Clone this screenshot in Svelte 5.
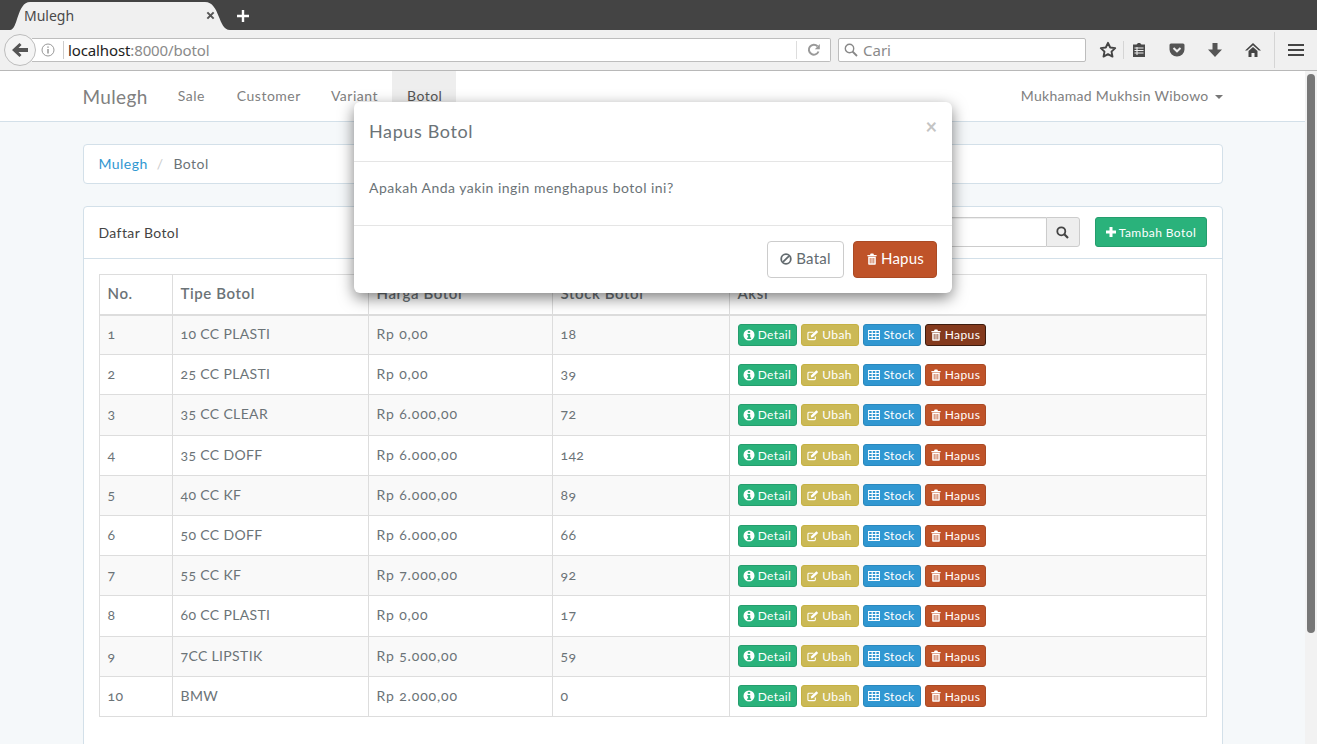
<script>
  const nav = ['Sale', 'Customer', 'Variant', 'Botol'];
  const rows = [
    [1, '10 CC PLASTI', 'Rp 0,00', 18],
    [2, '25 CC PLASTI', 'Rp 0,00', 39],
    [3, '35 CC CLEAR', 'Rp 6.000,00', 72],
    [4, '35 CC DOFF', 'Rp 6.000,00', 142],
    [5, '40 CC KF', 'Rp 6.000,00', 89],
    [6, '50 CC DOFF', 'Rp 6.000,00', 66],
    [7, '55 CC KF', 'Rp 7.000,00', 92],
    [8, '60 CC PLASTI', 'Rp 0,00', 17],
    [9, '7CC LIPSTIK', 'Rp 5.000,00', 59],
    [10, 'BMW', 'Rp 2.000,00', 0],
  ];
</script>

{#snippet info()}
  <svg class="ic" viewBox="0 0 12 12"><circle cx="6" cy="6" r="5.5" fill="currentColor" /><rect x="4.8" y="2" width="2.4" height="1.8" fill="var(--bg)" /><path d="M4.3 5h2.9v3.4h.9V10H4.2V8.4h.9V6.5h-.8z" fill="var(--bg)" /></svg>
{/snippet}
{#snippet edit()}
  <svg class="ic" viewBox="0 0 13 12"><path d="M9 7.5V10a1 1 0 0 1-1 1H2a1 1 0 0 1-1-1V4a1 1 0 0 1 1-1h5" fill="none" stroke="currentColor" stroke-width="1.2" /><path d="M4.5 6.3 10.2.8l1.9 1.9-5.6 5.6-2.2.3z" fill="currentColor" /></svg>
{/snippet}
{#snippet grid()}
  <svg class="ic" viewBox="0 0 12 12"><path d="M.6 1.5h10.8v9H.6zM.6 4.5h10.8M.6 7.5h10.8M4.2 1.5v9M7.8 1.5v9" fill="none" stroke="currentColor" stroke-width="1.1" /></svg>
{/snippet}
{#snippet trash()}
  <svg class="ic" viewBox="0 0 12 12"><path d="M4 2 4.7.6h2.6L8 2h2.6v1.2H1.4V2zM2.2 3.8h7.6V11a.8.8 0 0 1-.8.8H3a.8.8 0 0 1-.8-.8z" fill="currentColor" /><path d="M4.2 5v5.4M6 5v5.4M7.8 5v5.4" stroke="var(--bg)" stroke-width=".8" /></svg>
{/snippet}
{#snippet plus()}
  <svg class="ic" viewBox="0 0 12 12"><path d="M4.5 1h3v3.5H11v3H7.5V11h-3V7.500H1v-3h3.500z" fill="currentColor" /></svg>
{/snippet}

<div class="browser">
  <div class="tabstrip">
    <div class="tab">
      <svg class="tab-bg" viewBox="0 0 220 28" preserveAspectRatio="none"><path d="M0 28C8 28 7 0 20 0H195C210 0 208 28 220 28z" fill="#f0f0f0" /></svg>
      <span class="tab-title">Mulegh</span>
      <svg class="tab-x" viewBox="0 0 10 10"><path d="M1.500 1.500l7 7M8.500 1.500l-7 7" stroke="#555" stroke-width="2.200" /></svg>
    </div>
    <svg class="newtab" viewBox="0 0 14 14"><path d="M7 1v12M1 7h12" stroke="#fff" stroke-width="2.400" /></svg>
  </div>

  <div class="toolbar">
    <div class="back">
      <svg viewBox="0 0 16 14" width="16" height="14"><path d="M7.500 0 9.500 2 6.500 5H16v4H6.500l3 3-2 2L0 7z" fill="#555" /></svg>
    </div>
    <div class="urlbar">
      <svg class="i-circle" viewBox="0 0 14 14" width="14" height="14"><circle cx="7" cy="7" r="6" fill="none" stroke="#999" /><path d="M7 6v4.500M7 3.500v1.300" stroke="#888" stroke-width="1.300" /></svg>
      <span class="url-sep"></span>
      <span class="url"><b>localhost</b>:8000/botol</span>
      <span class="reload">
        <svg viewBox="0 0 14 14" width="14" height="14"><path d="M11.500 8.500A5 5 0 1 1 10.500 3.200" fill="none" stroke="#999" stroke-width="2" /><path d="M12.800 1v5.200H7.800z" fill="#999" /></svg>
      </span>
    </div>
    <div class="searchbar">
      <svg viewBox="0 0 14 14" width="14" height="14"><circle cx="5.500" cy="5.500" r="4.200" fill="none" stroke="#888" stroke-width="1.400" /><path d="m8.500 8.500 4.500 4.500" stroke="#888" stroke-width="1.800" /></svg>
      <span>Cari</span>
    </div>
    <div class="tools">
      <svg class="t-star" viewBox="0 0 18 18" width="18" height="18"><path d="m9 1.800 2.200 4.700 5 .6-3.700 3.500 1 5L9 13.100l-4.500 2.500 1-5L1.800 7.100l5-.6z" fill="none" stroke="#444" stroke-width="1.900" stroke-linejoin="round" /></svg>
      <span class="t-sep"></span>
      <svg class="t-clip" viewBox="0 0 16 16" width="16" height="16"><path d="M5.500 2.500 7 1h2l1.500 1.500H14V15H2V2.500z" fill="#4a4a4a" /><path d="M3.500 6h9M3.500 8.500h9M3.500 11h9M6 5v8" stroke="#eee" stroke-width="1.100" /></svg>
      <svg class="t-pocket" viewBox="0 0 16 16" width="16" height="16"><path d="M2 1.500h12A1.500 1.500 0 0 1 15.500 3v4.500a7.500 7 0 0 1-15 0V3A1.500 1.500 0 0 1 2 1.500z" fill="#555" /><path d="m4.500 6 3.500 3.300L11.500 6" fill="none" stroke="#eee" stroke-width="2" /></svg>
      <svg class="t-down" viewBox="0 0 16 16" width="16" height="16"><path d="M5.500 1h5v6.500H15L8 15 1 7.500h4.500z" fill="#555" /></svg>
      <svg class="t-home" viewBox="0 0 18 16" width="18" height="16"><path d="M9 1 1 8.500h2.200L9 3.200l5.800 5.300H17z" fill="#444" /><path d="M4.500 9 9 5l4.500 4v6h-3v-4h-3v4h-3z" fill="#444" /></svg>
      <span class="t-sep tall"></span>
      <svg class="t-menu" viewBox="0 0 16 14" width="16" height="14"><path d="M0 2h16M0 7h16M0 12h16" stroke="#444" stroke-width="2.200" /></svg>
    </div>
  </div>

  <div class="viewport">
    <div class="page">
      <nav class="navbar">
        <div class="container nav-inner">
          <a class="brand" href="#top">Mulegh</a>
          <ul class="nav-links">
            {#each nav as item}
              <li class:active={item === 'Botol'}>{item}</li>
            {/each}
          </ul>
          <div class="user">Mukhamad Mukhsin Wibowo <span class="caret"></span></div>
        </div>
      </nav>

      <div class="container">
        <div class="breadcrumb">
          <a href="#top">Mulegh</a>
          <span class="slash">/</span>
          <span>Botol</span>
        </div>

        <section class="panel">
          <header class="panel-head">
            <span class="panel-title">Daftar Botol</span>
            <div class="head-actions">
              <div class="search-group">
                <div class="search-input"></div>
                <div class="search-btn">
                  <svg viewBox="0 0 13 13" width="13" height="13"><circle cx="5.300" cy="5.300" r="4" fill="none" stroke="#444" stroke-width="1.800" /><path d="m8.300 8.300 3.700 3.700" stroke="#444" stroke-width="2.200" /></svg>
                </div>
              </div>
              <button class="btn add green">{@render plus()} Tambah Botol</button>
            </div>
          </header>

          <div class="panel-body">
            <table>
              <colgroup>
                <col class="c1" /><col class="c2" /><col class="c3" /><col class="c4" /><col />
              </colgroup>
              <thead>
                <tr><th>No.</th><th>Tipe Botol</th><th>Harga Botol</th><th>Stock Botol</th><th>Aksi</th></tr>
              </thead>
              <tbody>
                {#each rows as r, i}
                  <tr>
                    <td>{r[0]}</td>
                    <td>{r[1]}</td>
                    <td class="price">{r[2]}</td>
                    <td>{r[3]}</td>
                    <td class="aksi">
                      <button class="btn xs green">{@render info()} Detail</button>
                      <button class="btn xs yellow">{@render edit()} Ubah</button>
                      <button class="btn xs blue">{@render grid()} Stock</button>
                      <button class="btn xs red" class:pressed={i === 0}>{@render trash()} Hapus</button>
                    </td>
                  </tr>
                {/each}
              </tbody>
            </table>
          </div>
        </section>
      </div>

      <div class="modal" role="dialog">
        <div class="modal-head">
          <h4>Hapus Botol</h4>
          <span class="close">×</span>
        </div>
        <div class="modal-body">Apakah Anda yakin ingin menghapus botol ini?</div>
        <div class="modal-foot">
          <button class="btn md plain">
            <svg class="ic" viewBox="0 0 12 12"><circle cx="6" cy="6" r="4.800" fill="none" stroke="currentColor" stroke-width="1.800" /><path d="m2.800 9.200 6.400-6.400" stroke="currentColor" stroke-width="1.800" /></svg>
            Batal
          </button>
          <button class="btn md red">{@render trash()} Hapus</button>
        </div>
      </div>
    </div>

    <div class="scrollbar"><div class="thumb"></div></div>
  </div>
</div>

<style>
  :global(body) {
    margin: 0;
    overflow: hidden;
  }

  .browser {
    width: 1317px;
    height: 744px;
    display: flex;
    flex-direction: column;
    overflow: hidden;
    font-family: Lato, "Liberation Sans", sans-serif;
    font-size: 14px;
    color: #6b7377;
  }

  /* browser chrome */
  .tabstrip {
    height: 30px;
    flex: none;
    background: #444;
    display: flex;
    align-items: flex-end;
    box-sizing: border-box;
    padding-left: 10px;
  }

  .tab {
    position: relative;
    width: 220px;
    height: 28px;
    display: flex;
    align-items: center;
    justify-content: space-between;
    box-sizing: border-box;
    padding: 0 15px 1px 14px;
    font: 14px "Noto Sans", sans-serif;
    color: #4a4a4a;
  }

  .tab-bg {
    position: absolute;
    inset: 0;
    width: 100%;
    height: 100%;
  }

  .tab-title {
    position: relative;
  }

  .tab-x {
    position: relative;
    width: 9px;
    height: 9px;
  }

  .newtab {
    width: 14px;
    height: 14px;
    margin: 0 0 7px 6px;
  }

  .toolbar {
    height: 41px;
    flex: none;
    box-sizing: border-box;
    background: #f0f0f0;
    border-bottom: 1px solid #b8b8b8;
    display: flex;
    align-items: center;
    padding-left: 4px;
    font-family: "Noto Sans", sans-serif;
  }

  .back {
    width: 30px;
    height: 30px;
    border: 1px solid #bdbdbd;
    border-radius: 50%;
    background: #f4f4f4;
    display: flex;
    align-items: center;
    justify-content: center;
    z-index: 1;
    flex: none;
  }

  .urlbar {
    width: 799px;
    height: 24px;
    margin-left: -4px;
    box-sizing: border-box;
    background: #fff;
    border: 1px solid #bdbdbd;
    border-left: none;
    border-radius: 0 2px 2px 0;
    display: flex;
    align-items: center;
    padding-left: 9px;
    font-size: 15px;
    letter-spacing: -0.12px;
    color: #8a8a8a;
    flex: none;
  }

  .url-sep {
    width: 1px;
    height: 18px;
    background: #ccc;
    margin: 0 4px 0 8px;
  }

  .url b {
    font-weight: 400;
    color: #222;
  }

  .reload {
    margin-left: auto;
    width: 33px;
    height: 18px;
    border-left: 1px solid #ddd;
    display: flex;
    align-items: center;
    justify-content: center;
  }

  .searchbar {
    width: 248px;
    height: 24px;
    margin-left: 7px;
    box-sizing: border-box;
    background: #fff;
    border: 1px solid #bdbdbd;
    border-radius: 2px;
    display: flex;
    align-items: center;
    gap: 5px;
    padding-left: 5px;
    font-size: 15px;
    color: #8a8a8a;
    flex: none;
  }

  .tools {
    display: flex;
    align-items: center;
    height: 100%;
  }

  .t-star { margin-left: 13px; }
  .t-sep { width: 1px; height: 18px; background: #d5d5d5; margin-left: 6px; }
  .t-sep.tall { height: 36px; margin-left: 12px; }
  .t-clip { margin-left: 7px; }
  .t-pocket { margin-left: 22px; }
  .t-down { margin-left: 22px; }
  .t-home { margin-left: 21px; }
  .t-menu { margin-left: 13px; }

  /* page */
  .viewport {
    flex: 1;
    min-height: 0;
    display: flex;
  }

  .page {
    position: relative;
    flex: 1;
    min-width: 0;
    background: #f5f8fa;
    overflow: hidden;
  }

  .scrollbar {
    width: 12px;
    flex: none;
    background: #f2f2f2;
    padding: 3px 2px 0 2px;
    box-sizing: border-box;
  }

  .thumb {
    height: 559px;
    background: #777;
    border-radius: 4px;
  }

  .container {
    width: 1140px;
    margin: 0 auto;
  }

  a {
    text-decoration: none;
  }

  .navbar {
    height: 51px;
    box-sizing: border-box;
    background: #fff;
    border-bottom: 1px solid #d3e0e9;
    margin-bottom: 22px;
  }

  .nav-inner {
    display: flex;
    align-items: stretch;
    height: 50px;
  }

  .brand {
    font-size: 19px;
    color: #808080;
    line-height: 51px;
    margin-right: 15px;
    letter-spacing: 0.35px;
  }

  .nav-links {
    list-style: none;
    display: flex;
    margin: 0;
    padding: 0;
  }

  .nav-links li {
    padding: 0 15px;
    line-height: 50px;
    color: #808080;
    letter-spacing: 0.5px;
  }

  .nav-links li:first-child {
    padding-right: 17px;
  }

  .nav-links li.active {
    background: #eee;
    color: #555;
    width: 34px;
    margin-left: -1px;
  }

  .user {
    margin-left: auto;
    line-height: 50px;
    color: #808080;
    letter-spacing: 0.3px;
  }

  .caret {
    display: inline-block;
    width: 0;
    height: 0;
    margin-left: 2px;
    vertical-align: middle;
    border-top: 4px solid #777;
    border-left: 4px solid transparent;
    border-right: 4px solid transparent;
  }

  .breadcrumb {
    height: 40px;
    box-sizing: border-box;
    background: #fff;
    border: 1px solid #d3e0e9;
    border-radius: 4px;
    display: flex;
    align-items: center;
    padding: 0 0 2px 15px;
    margin-bottom: 22px;
    letter-spacing: 0.45px;
  }

  .breadcrumb a {
    color: #3097d1;
  }

  .slash {
    color: #ccc;
    margin: 0 10px 0 9px;
  }

  .panel {
    background: #fff;
    border: 1px solid #d3e0e9;
    border-radius: 4px 4px 0 0;
    height: 600px;
  }

  .panel-head {
    height: 52px;
    box-sizing: border-box;
    border-bottom: 1px solid #d3e0e9;
    display: flex;
    align-items: center;
    justify-content: space-between;
    padding: 0 15px 1px;
  }

  .panel-title {
    color: #444;
    letter-spacing: 0.4px;
  }

  .head-actions {
    display: flex;
    align-items: center;
    gap: 15px;
  }

  .search-group {
    display: flex;
    height: 30px;
  }

  .search-input {
    width: 300px;
    box-sizing: border-box;
    border: 1px solid #ccc;
    border-right: none;
    border-radius: 3px 0 0 3px;
    box-shadow: inset 0 1px 1px rgba(0, 0, 0, 0.075);
  }

  .search-btn {
    width: 34px;
    box-sizing: border-box;
    background: #eee;
    border: 1px solid #ccc;
    border-radius: 0 3px 3px 0;
    display: flex;
    align-items: center;
    justify-content: center;
  }

  .panel-body {
    padding: 15px;
  }

  table {
    width: 1108px;
    table-layout: fixed;
    border-collapse: collapse;
  }

  .c1 { width: 73px; }
  .c2 { width: 196px; }
  .c3 { width: 184px; }
  .c4 { width: 177px; }

  th, td {
    border: 1px solid #ddd;
    padding: 0 8px;
    text-align: left;
    font-weight: 400;
    box-sizing: border-box;
  }

  th {
    height: 40px;
    font-size: 15px;
    font-weight: 600;
    letter-spacing: 0.6px;
    border-bottom-width: 2px;
    padding-bottom: 3px;
  }

  td {
    height: 40.200px;
    letter-spacing: 0.35px;
    padding-bottom: 2px;
    font-variant-numeric: oldstyle-nums;
  }

  td.price {
    letter-spacing: 0.85px;
  }

  tbody tr:nth-child(odd) {
    background: #f9f9f9;
  }

  .aksi {
    font-size: 0;
    letter-spacing: 0;
    padding-top: 0;
    padding-bottom: 0;
  }

  .aksi .btn + .btn {
    margin-left: 4px;
  }

  .btn {
    --bg: #fff;
    font-family: inherit;
    color: #fff;
    border: 1px solid transparent;
    background: var(--bg);
    white-space: nowrap;
    cursor: pointer;
    padding: 0;
    box-sizing: border-box;
    display: inline-flex;
    align-items: center;
    justify-content: center;
    gap: 3px;
  }

  .ic {
    width: 12px;
    height: 12px;
    flex: none;
  }

  .xs {
    height: 22px;
    font-size: 12px;
    border-radius: 3px;
    letter-spacing: 0.4px;
    vertical-align: middle;
  }

  .xs.green { width: 59px; }
  .xs.yellow { width: 58px; }
  .xs.blue { width: 58px; }
  .xs.red { width: 61px; }

  .add {
    width: 112px;
    height: 30px;
    font-size: 12px;
    border-radius: 3px;
    letter-spacing: 0.42px;
    gap: 2px;
  }

  .md {
    height: 37px;
    font-size: 15px;
    border-radius: 4px;
    letter-spacing: 0.2px;
    padding-bottom: 3px;
  }

  .md .ic {
    margin-top: 2px;
  }

  .green { --bg: #2ab27b; border-color: #259d6d; }
  .yellow { --bg: #cbb956; border-color: #c5b143; }
  .blue { --bg: #3097d1; border-color: #2a88bd; }
  .red { --bg: #bf5329; border-color: #aa4a24; }
  .pressed { --bg: #843A1D; border-color: #3d1b0d; }
  .plain { --bg: #fff; border-color: #ccc; color: #636b6f; width: 77px; gap: 4px; }
  .md.red { width: 84px; }

  .modal {
    position: absolute;
    top: 31px;
    left: 354px;
    width: 598px;
    background: #fff;
    border-radius: 6px;
    box-shadow: 0 5px 15px rgba(0, 0, 0, 0.5);
  }

  .modal-head {
    height: 60px;
    box-sizing: border-box;
    border-bottom: 1px solid #e5e5e5;
    display: flex;
    align-items: center;
    justify-content: space-between;
    padding: 0 15px 2px;
  }

  h4 {
    margin: 0;
    font-size: 18px;
    font-weight: 400;
    letter-spacing: 0.62px;
  }

  .close {
    font-size: 20px;
    font-weight: 700;
    color: #c4c4c4;
    margin: -9px 0 0 0;
    line-height: 1;
  }

  .modal-body {
    height: 63px;
    box-sizing: border-box;
    padding: 17px 15px 0;
    letter-spacing: 0.47px;
  }

  .modal-foot {
    height: 68px;
    box-sizing: border-box;
    border-top: 1px solid #e5e5e5;
    display: flex;
    justify-content: flex-end;
    align-items: flex-start;
    gap: 9px;
    padding: 15px 15px 0;
  }
</style>
